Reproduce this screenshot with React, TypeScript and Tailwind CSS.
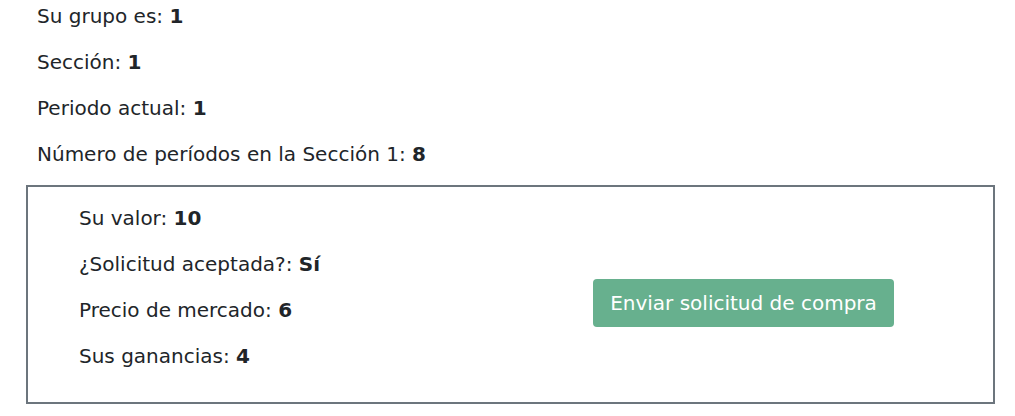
import React from "react";

const Row = ({ label, value }: { label: string; value: string }) => (
  <p className="leading-[30px] mb-[16px]">
    {label} <b className="font-bold">{value}</b>
  </p>
);

export default function App() {
  return (
    <div
      className="w-[1015px] h-[416px] bg-white text-[#212529] text-[20px] overflow-hidden"
      style={{ fontFamily: '"DejaVu Sans", sans-serif' }}
    >
      <div className="pl-[37px] pt-[1px]">
        <Row label="Su grupo es:" value="1" />
        <Row label="Sección:" value="1" />
        <Row label="Periodo actual:" value="1" />
        <Row label="Número de períodos en la Sección 1:" value="8" />
      </div>
      <div className="mt-[1px] ml-[26px] w-[969px] h-[219px] border-2 border-[#6c757d] flex">
        <div className="pl-[51px] pt-[16px] w-[565px]">
          <Row label="Su valor:" value="10" />
          <Row label="¿Solicitud aceptada?:" value="Sí" />
          <Row label="Precio de mercado:" value="6" />
          <Row label="Sus ganancias:" value="4" />
        </div>
        <div className="pt-[92px]">
          <button className="w-[301px] h-[48px] rounded-[4px] bg-[#67b08e] text-white text-[20px] leading-[30px]">
            Enviar solicitud de compra
          </button>
        </div>
      </div>
    </div>
  );
}
